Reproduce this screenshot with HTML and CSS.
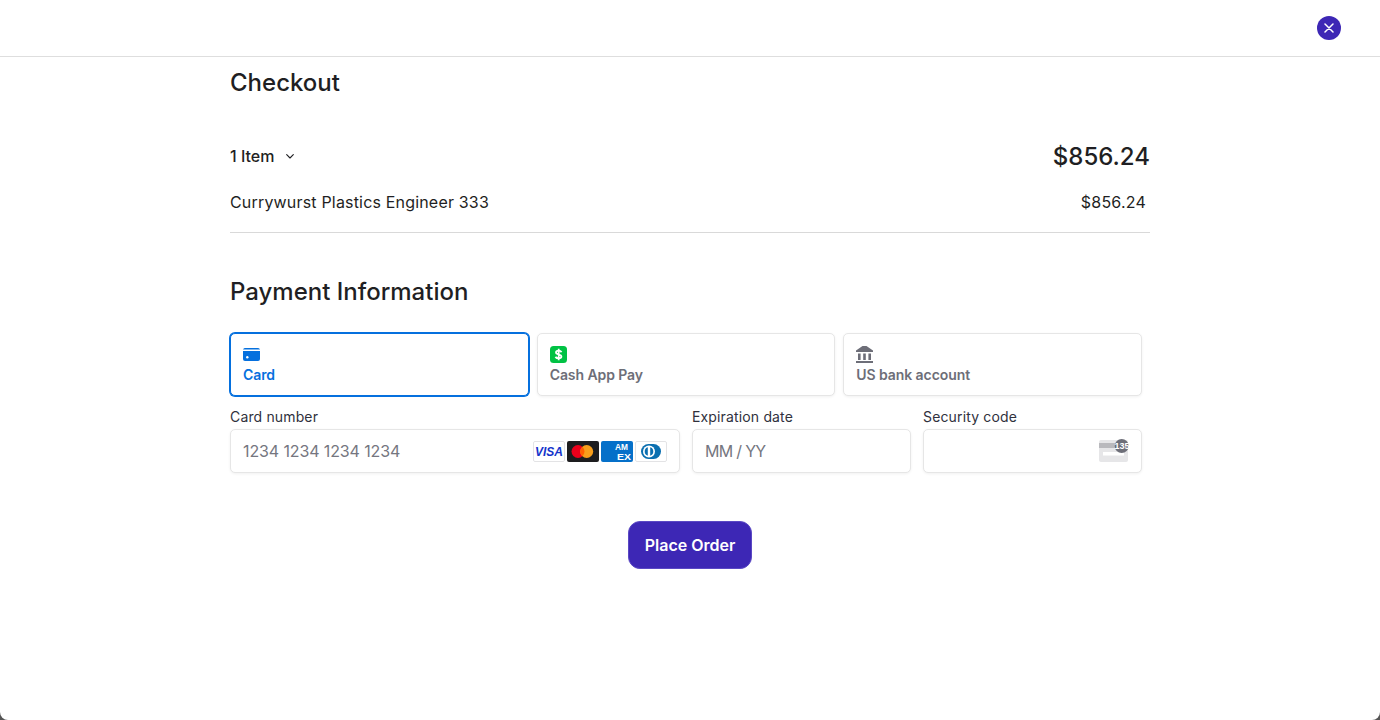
FILE: index.html
```html
<!DOCTYPE html>
<html lang="en">
<head>
    <meta charset="UTF-8">
    <meta name="viewport" content="width=device-width, initial-scale=1.0">
    <title>Checkout</title>
    <link rel="stylesheet" href="styles.css">
</head>
<body>
<div class="modal">
    <header class="modal-header">
        <button type="button" class="close-btn" aria-label="Close">
            <svg width="10" height="10" viewBox="0 0 10 10"><path d="M1 1l8 8M9 1l-8 8" stroke="#fff" stroke-width="1.5" stroke-linecap="round"/></svg>
        </button>
    </header>

    <main class="content">
        <h1 class="title">Checkout</h1>

        <div class="summary-head">
            <div class="items-toggle">
                <span>1 Item</span>
                <svg width="8" height="5" viewBox="0 0 8 5"><path d="M.7.7L4 4l3.300-3.300" fill="none" stroke="#1f1f23" stroke-width="1.100" stroke-linecap="round" stroke-linejoin="round"/></svg>
            </div>
            <div class="total">$856.24</div>
        </div>
        <div class="line-item">
            <span>Currywurst Plastics Engineer 333</span>
            <span class="line-price">$856.24</span>
        </div>

        <h2 class="title payment-title">Payment Information</h2>

        <div class="payment-form">
            <div class="tabs">
                <div class="tab tab-active">
                    <svg width="17" height="17" viewBox="0 0 17 17"><path d="M2 2h13a2 2 0 0 1 2 1.500H0A2 2 0 0 1 2 2z" fill="#0570de"/><path d="M0 5h17v8a2 2 0 0 1-2 2H2a2 2 0 0 1-2-2z" fill="#0570de"/><circle cx="4.300" cy="11.300" r="1.200" fill="#fff"/></svg>
                    <span>Card</span>
                </div>
                <div class="tab">
                    <svg width="17" height="17" viewBox="0 0 17 17"><rect width="17" height="17" rx="3.500" fill="#00c244"/><path d="M11.600 6.100C10.900 5.200 9.800 4.700 8.600 4.700 7.100 4.700 6 5.400 6 6.600c0 2.600 5.400 1.300 5.400 3.900 0 1.200-1.300 1.900-2.800 1.900-1.300 0-2.500-.6-3.200-1.500M8.700 2.800v11.400" fill="none" stroke="#fff" stroke-width="1.800"/></svg>
                    <span>Cash App Pay</span>
                </div>
                <div class="tab">
                    <svg width="17" height="17" viewBox="0 0 17 17" fill="#6d6e78"><path d="M6.500 0h4L17 4.500V6H0V4.500z"/><path d="M2 7.500h2.600v6.500H2zM7.200 7.500h2.600v6.500H7.200zM12.400 7.500H15v6.500h-2.600zM0 15h17v2H0z"/></svg>
                    <span>US bank account</span>
                </div>
            </div>

            <div class="fields">
                <div class="field">
                    <label class="field-label">Card number</label>
                    <div class="field-input">
                        <span class="placeholder">1234 1234 1234 1234</span>
                        <div class="brands">
                            <svg width="32" height="21" viewBox="0 0 32 21"><rect x=".5" y=".5" width="31" height="20" rx="1.500" fill="#fff" stroke="#e3e3e5"/><text x="16" y="14.800" text-anchor="middle" class="visa-text">VISA</text></svg>
                            <svg width="32" height="21" viewBox="0 0 32 21"><rect width="32" height="21" rx="2" fill="#1d1d1f"/><circle cx="11" cy="10.500" r="6.500" fill="#eb001b"/><circle cx="19.700" cy="10.500" r="6.500" fill="#f79e1b"/><path d="M15.350 5.700a6.500 6.500 0 0 1 0 9.600 6.500 6.500 0 0 1 0-9.600z" fill="#ff5f00"/></svg>
                            <svg width="32" height="21" viewBox="0 0 32 21"><rect width="32" height="21" rx="2" fill="#0570c9"/><text x="14" y="9" textLength="13" lengthAdjust="spacingAndGlyphs" class="amex-text">AM</text><text x="16" y="19" textLength="14" lengthAdjust="spacingAndGlyphs" class="amex-text">EX</text></svg>
                            <svg width="32" height="21" viewBox="0 0 32 21"><rect x=".5" y=".5" width="31" height="20" rx="1.500" fill="#fff" stroke="#e3e3e5"/><rect x="6" y="3" width="20" height="15" rx="7.500" fill="#0b6fb0"/><circle cx="14" cy="10.500" r="6" fill="#fff"/><path d="M12.800 6.300a4.400 4.400 0 0 0 0 8.400zM15.200 6.300v8.400a4.400 4.400 0 0 0 0-8.400z" fill="#0b6fb0"/></svg>
                        </div>
                    </div>
                </div>
                <div class="field">
                    <label class="field-label">Expiration date</label>
                    <div class="field-input">
                        <span class="placeholder placeholder-date">MM / YY</span>
                    </div>
                </div>
                <div class="field">
                    <label class="field-label">Security code</label>
                    <div class="field-input field-input-end">
                        <svg class="cvc-icon" width="30" height="22" viewBox="0 0 30 22"><rect x="0" y="0" width="29" height="22" rx="2" fill="#e6e6e8"/><rect x="0" y="3" width="29" height="5" fill="#b9b9bd"/><rect x="4" y="12" width="21" height="3.500" fill="#fff"/><circle cx="22.700" cy="6" r="7" fill="#6d6e78"/><text x="23" y="9.200" text-anchor="middle" class="cvc-text">135</text></svg>
                    </div>
                </div>
            </div>
        </div>

        <div class="actions">
            <button type="button" class="place-order">Place Order</button>
        </div>
    </main>
</div>
</body>
</html>
```

FILE: styles.css
```css
* {
    box-sizing: border-box;
}
html, body {
    height: 100%;
}
body {
    margin: 0;
    background-color: #555;
    color: #1f1f23;
    font-family: Inter, "Liberation Sans", sans-serif;
    overflow: hidden;
}
.modal {
    height: 720px;
    background-color: #fff;
    border-radius: 0 0 8px 8px;
}
.modal-header {
    height: 57px;
    padding: 16px 39px 0 0;
    display: flex;
    justify-content: flex-end;
    border-bottom: 1px solid #dedede;
}
.close-btn {
    width: 24px;
    height: 24px;
    padding: 0;
    border: none;
    border-radius: 50%;
    background-color: #3d27b5;
    display: flex;
    align-items: center;
    justify-content: center;
}
.content {
    width: 920px;
    margin: 0 auto;
    padding-top: 10px;
}
.title {
    margin: 0;
    font-size: 24px;
    line-height: 32px;
    font-weight: 500;
}
.summary-head {
    margin-top: 41px;
    height: 32px;
    display: flex;
    align-items: center;
    justify-content: space-between;
}
.items-toggle {
    display: flex;
    align-items: center;
    gap: 12px;
    font-size: 16px;
    font-weight: 500;
}
.total {
    font-size: 24px;
    font-weight: 500;
}
.line-item {
    margin-top: 18px;
    padding-bottom: 18px;
    padding-right: 4px;
    display: flex;
    justify-content: space-between;
    font-size: 16px;
    line-height: 24px;
    letter-spacing: 0.18px;
    border-bottom: 1px solid #d9d9d9;
}
.line-price {
    letter-spacing: 0.2px;
}
.payment-title {
    margin-top: 43px;
}
.payment-form {
    width: 912px;
    margin-top: 25px;
}
.tabs {
    display: grid;
    grid-template-columns: repeat(3, 1fr);
    gap: 8px;
}
.tab {
    height: 63px;
    padding: 12px 12px 0;
    display: flex;
    flex-direction: column;
    align-items: flex-start;
    gap: 3px;
    background-color: #fff;
    border: 1px solid #e6e6e6;
    border-radius: 5px;
    box-shadow: 0 1px 3px rgba(0, 0, 0, 0.06);
    color: #6d6e78;
    font-size: 14px;
    line-height: 17px;
    font-weight: 600;
    letter-spacing: -0.08px;
}
.tab svg {
    display: block;
}
.tab-active {
    border-color: #0570de;
    box-shadow: 0 0 0 1px #0570de;
    color: #0570de;
}
.fields {
    margin-top: 12px;
    display: grid;
    grid-template-columns: 450px 219px 219px;
    column-gap: 12px;
}
.field-label {
    display: block;
    margin-bottom: 4px;
    font-size: 14px;
    line-height: 17px;
    letter-spacing: 0.15px;
    color: #30313d;
}
.field-input {
    height: 44px;
    padding: 0 12px;
    display: flex;
    align-items: center;
    justify-content: space-between;
    background-color: #fff;
    border: 1px solid #e6e6e6;
    border-radius: 5px;
    box-shadow: 0 1px 3px rgba(0, 0, 0, 0.06);
}
.field-input-end {
    justify-content: flex-end;
}
.placeholder {
    font-size: 16px;
    letter-spacing: -0.12px;
    color: #757680;
}
.placeholder-date {
    letter-spacing: -0.7px;
}
.brands {
    display: flex;
    gap: 2px;
}
.brands svg {
    display: block;
}
.visa-text {
    font-family: "Liberation Sans", sans-serif;
    font-size: 12px;
    font-weight: 700;
    font-style: italic;
    fill: #1434cb;
}
.amex-text {
    font-family: "Liberation Sans", sans-serif;
    font-size: 8.500px;
    font-weight: 700;
    fill: #fff;
}
.cvc-icon {
    overflow: visible;
}
.cvc-text {
    font-family: "Liberation Sans", sans-serif;
    font-size: 9px;
    font-weight: 700;
    fill: #fff;
}
.actions {
    margin-top: 48px;
    display: flex;
    justify-content: center;
}
.place-order {
    height: 48px;
    padding: 0 16px;
    border: 1px solid #5a48c4;
    border-radius: 12px;
    background-color: #3d27b5;
    color: #fff;
    font-family: Inter, "Liberation Sans", sans-serif;
    font-size: 16px;
    font-weight: 600;
}
```
